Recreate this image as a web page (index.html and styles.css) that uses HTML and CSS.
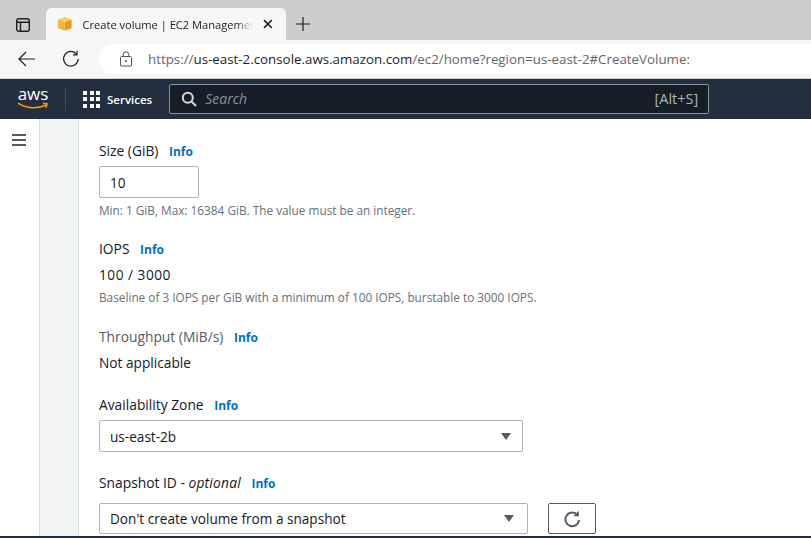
FILE: index.html
```html
<!DOCTYPE html>
<html lang="en">

<head>
    <meta charset="UTF-8">
    <meta name="viewport" content="width=device-width, initial-scale=1.0">
    <title>Create volume | EC2 Management Console</title>
    <link rel="stylesheet" href="styles.css">
</head>

<body>
    <div class="tabstrip">
        <svg class="tab-actions" width="16" height="16" viewBox="0 0 16 16" fill="none" stroke="#1f1f1f" stroke-width="1.4">
            <rect x="1.7" y="1.7" width="12.6" height="12.6" rx="2"/>
            <path d="M1.7 5.2h12.6M5.5 5.2v9" />
        </svg>
        <div class="tab">
            <svg class="favicon" width="16" height="16" viewBox="0 0 16 16">
                <path d="M8 1l7 2.6v8.8L8 15z" fill="#e89a20"/>
                <path d="M8 1L1 3.6v8.8L8 15z" fill="#f7b733"/>
                <path d="M1 3.6L8 6.2l7-2.6L8 1z" fill="#fbcb6a"/>
            </svg>
            <span class="tab-title">Create volume | EC2 Managemer</span>
            <svg class="tab-close" width="10" height="10" viewBox="0 0 10 10" stroke="#1f1f1f" stroke-width="1.5">
                <path d="M1 1l8 8M9 1l-8 8"/>
            </svg>
        </div>
        <svg class="new-tab" width="16" height="16" viewBox="0 0 16 16" stroke="#1f1f1f" stroke-width="1.2">
            <path d="M8 1v14M1 8h14"/>
        </svg>
    </div>

    <div class="toolbar">
        <svg class="back" width="18" height="16" viewBox="0 0 18 16" fill="none" stroke="#1f1f1f" stroke-width="1.2">
            <path d="M1 8h16M8 1L1 8l7 7"/>
        </svg>
        <svg class="reload" width="18" height="18" viewBox="0 0 18 18" fill="none" stroke="#1f1f1f" stroke-width="1.2">
            <path d="M14.6 4.2A7.3 7.3 0 1 0 16.2 9"/>
            <path d="M15 .8v4h-4"/>
        </svg>
        <div class="address">
            <svg class="lock" width="14" height="16" viewBox="0 0 14 16" fill="none" stroke="#555" stroke-width="1">
                <rect x="1.5" y="5.5" width="11" height="9.5" rx="1"/>
                <path d="M4.2 5.5V3.6a2.8 2.8 0 0 1 5.6 0v1.9"/>
                <circle cx="7" cy="10" r=".6" fill="#555"/>
            </svg>
            <span class="url"><span class="url-dim">https://</span><span class="url-host">us-east-2.console.aws.amazon.com</span><span class="url-dim">/ec2/home?region=us-east-2#CreateVolume:</span></span>
        </div>
    </div>

    <header class="topnav">
        <div class="aws-logo">
            <span class="aws-text">aws</span>
            <svg class="aws-smile" width="32" height="8" viewBox="0 0 32 8" fill="none" stroke="#ff9900" stroke-width="1.5">
                <path d="M1 1.2c8 5.4 20 6 28 1.6"/>
                <path d="M26 1.2l4.2.6-1.6 3.8"/>
            </svg>
        </div>
        <div class="nav-sep"></div>
        <div class="services">
            <div class="dots">
                <i></i><i></i><i></i><i></i><i></i><i></i><i></i><i></i><i></i>
            </div>
            <span>Services</span>
        </div>
        <div class="search">
            <svg width="16" height="16" viewBox="0 0 16 16" fill="none" stroke="#d5dbdb" stroke-width="2">
                <circle cx="6.8" cy="6.8" r="5"/>
                <path d="M10.5 10.5L15 15"/>
            </svg>
            <span class="search-text">Search</span>
            <span class="search-key">[Alt+S]</span>
        </div>
    </header>

    <main class="console">
        <aside class="side-nav">
            <div class="burger"><i></i><i></i><i></i></div>
        </aside>
        <div class="side-gutter"></div>
        <section class="form">
            <div class="field field-size">
                <div class="label">Size (GiB) <a class="info">Info</a></div>
                <div class="input size-input">10</div>
                <p class="hint">Min: 1 GiB, Max: 16384 GiB. The value must be an integer.</p>
            </div>
            <div class="field field-iops">
                <div class="label">IOPS <a class="info">Info</a></div>
                <div class="value value-num">100 / 3000</div>
                <p class="hint">Baseline of 3 IOPS per GiB with a minimum of 100 IOPS, burstable to 3000 IOPS.</p>
            </div>
            <div class="field field-throughput">
                <div class="label muted">Throughput (MiB/s) <a class="info">Info</a></div>
                <div class="value">Not applicable</div>
            </div>
            <div class="field field-zone">
                <div class="label">Availability Zone <a class="info">Info</a></div>
                <div class="input select zone-select">us-east-2b<i class="caret"></i></div>
            </div>
            <div class="field">
                <div class="label">Snapshot ID - <em>optional</em> <a class="info">Info</a></div>
                <div class="snapshot-row">
                    <div class="input select snapshot-select">Don't create volume from a snapshot<i class="caret"></i></div>
                    <button class="refresh" type="button">
                        <svg width="18" height="18" viewBox="0 0 18 18" fill="none" stroke="#545b64" stroke-width="2">
                            <path d="M14.4 5A6.8 6.8 0 1 0 16 10"/>
                            <path d="M15.8 .8v5.4h-5.4z" fill="#545b64" stroke="none"/>
                        </svg>
                    </button>
                </div>
            </div>
        </section>
    </main>
    <div class="bottom-bar"></div>
</body>

</html>
```

FILE: styles.css
```css
html,
body {
    margin: 0;
    height: 538px;
    overflow: hidden;
}

body {
    width: 811px;
    display: flex;
    flex-direction: column;
    font-family: "Open Sans", Arial, sans-serif;
    color: #16191f;
    background: white;
}

/* browser chrome */
.tabstrip {
    height: 40px;
    flex: none;
    display: flex;
    align-items: center;
    background-color: #cdcdcd;
}

.tab-actions {
    margin-left: 15px;
    margin-top: 10px;
}

.tab {
    width: 240px;
    height: 32px;
    margin-left: 15px;
    margin-top: 8px;
    padding: 0 13px 0 11px;
    box-sizing: border-box;
    display: flex;
    align-items: center;
    background: #f7f7f7;
    border-radius: 6px 6px 0 0;
}

.tab-title {
    width: 176px;
    margin-left: 10px;
    font-size: 11.1px;
    white-space: nowrap;
    overflow: hidden;
    color: #222;
    -webkit-mask-image: linear-gradient(to right, black 90%, transparent);
    mask-image: linear-gradient(to right, black 90%, transparent);
}

.tab-close {
    margin-left: 10px;
}

.new-tab {
    margin-left: 9px;
    margin-top: 8px;
}

.toolbar {
    height: 38px;
    flex: none;
    display: flex;
    align-items: center;
    background: #f7f7f7;
    border-bottom: 1px solid #d0d0d0;
    padding-left: 18px;
}

.reload {
    margin-left: 26px;
}

.address {
    flex: 1;
    height: 30px;
    margin-left: 19px;
    padding-left: 20px;
    display: flex;
    align-items: center;
    background: white;
    border-radius: 15px 0 0 15px;
}

.url {
    margin-left: 15px;
    font-size: 13.33px;
    white-space: nowrap;
}

.url-dim {
    color: #666;
}

.url-host {
    color: #1f1f1f;
}

/* aws top bar */
.topnav {
    height: 40px;
    flex: none;
    display: flex;
    align-items: center;
    background-color: #232f3e;
    color: white;
}

.aws-logo {
    width: 32px;
    margin-left: 17px;
    height: 30px;
    display: flex;
    flex-direction: column;
    align-items: center;
}

.aws-text {
    font-size: 17px;
    line-height: 20px;
    color: white;
}

.aws-smile {
    margin-top: -2px;
}

.nav-sep {
    width: 1px;
    height: 24px;
    margin-left: 16px;
    background: #414d5c;
}

.services {
    display: flex;
    align-items: center;
    margin-left: 17px;
    font-size: 11.5px;
    font-weight: 600;
}

.dots {
    width: 17px;
    display: grid;
    grid-template-columns: repeat(3, 4px);
    gap: 2.5px;
    margin-right: 7px;
}

.dots i {
    height: 4px;
    background: white;
}

.search {
    width: 540px;
    height: 30px;
    box-sizing: border-box;
    margin-left: 17px;
    padding: 0 10px 0 11px;
    display: flex;
    align-items: center;
    background: #161d26;
    border: 1px solid #879596;
    border-radius: 2px;
}

.search-text {
    flex: 1;
    margin-left: 8px;
    font-size: 14px;
    font-style: italic;
    line-height: 18px;
    color: #879596;
}

.search-key {
    font-size: 14.5px;
    line-height: 18px;
    color: #aab7b8;
}

/* page body */
.console {
    flex: 1;
    display: flex;
    min-height: 0;
}

.side-nav {
    width: 39px;
    flex: none;
    border-right: 1px solid #d5dbdb;
    box-sizing: content-box;
}

.burger {
    width: 14px;
    margin: 15px 0 0 12px;
}

.burger i {
    display: block;
    height: 2px;
    margin-bottom: 3px;
    background: #545b64;
}

.side-gutter {
    width: 38px;
    flex: none;
    background: #f2f3f3;
    border-right: 1px solid #d5dbdb;
}

.form {
    flex: 1;
    padding: 23px 0 0 20px;
}

.field {
    margin-bottom: 20px;
}

.field-size {
    margin-bottom: 22px;
}

.field-iops,
.field-throughput {
    margin-bottom: 23px;
}

.field-zone {
    margin-bottom: 22px;
}

.label {
    font-size: 13.8px;
    line-height: 18px;
}

.label em {
    letter-spacing: 0.2px;
}

.muted {
    color: #545b64;
}

.info {
    margin-left: 7px;
    font-size: 12px;
    font-weight: 700;
    color: #0073bb;
}

.input {
    box-sizing: border-box;
    height: 32px;
    margin-top: 5px;
    padding: 0 10px;
    display: flex;
    align-items: center;
    font-size: 13.6px;
    background: white;
    border: 1px solid #aab7b8;
    border-radius: 2px;
}

.size-input {
    width: 100px;
}

.select {
    justify-content: space-between;
}

.zone-select {
    width: 424px;
}

.caret {
    width: 0;
    height: 0;
    margin-right: 1px;
    border-left: 5px solid transparent;
    border-right: 5px solid transparent;
    border-top: 7px solid #545b64;
}

.hint {
    margin: 4px 0 0;
    font-size: 11.8px;
    line-height: 16px;
    color: #687078;
}

.value {
    margin-top: 6px;
    font-size: 13.7px;
    line-height: 20px;
}

.value-num {
    letter-spacing: 0.5px;
}

.snapshot-row {
    display: flex;
    gap: 20px;
}

.snapshot-select {
    width: 429px;
    height: 31px;
    margin-top: 10px;
}

.snapshot-select .caret {
    margin-right: 3px;
}

.refresh {
    width: 48px;
    height: 31px;
    margin-top: 10px;
    padding: 0;
    display: flex;
    align-items: center;
    justify-content: center;
    background: white;
    border: 1px solid #545b64;
    border-radius: 2px;
}

.bottom-bar {
    position: absolute;
    left: 0;
    right: 0;
    bottom: 0;
    height: 2px;
    background: #232f3e;
}
```
